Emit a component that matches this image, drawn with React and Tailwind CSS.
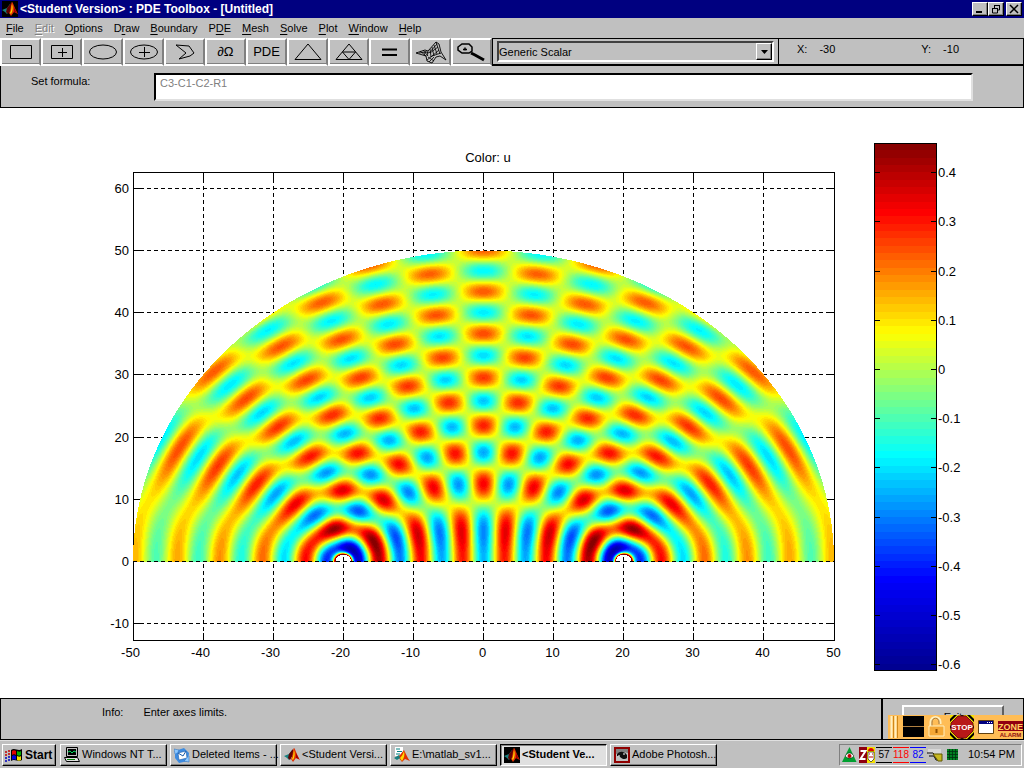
import { Children } from 'react';

const raised = 'border border-t-white border-l-white border-r-black border-b-black shadow-[inset_-1px_-1px_0_#808080]';

const menus = [
  ['', 'F', 'ile'],
  ['', 'E', 'dit', true],
  ['', 'O', 'ptions'],
  ['D', 'r', 'aw'],
  ['', 'B', 'oundary'],
  ['P', 'D', 'E'],
  ['', 'M', 'esh'],
  ['', 'S', 'olve'],
  ['', 'P', 'lot'],
  ['', 'W', 'indow'],
  ['', 'H', 'elp'],
];

// Colour map: position from the top of the bar (px) and rgb at that point
const BAR_TOP = 143;
const BAR_HEIGHT = 528;
const BANDS = 72;
const stops = [
  [0, [128, 0, 0]],
  [70, [255, 0, 0]],
  [190, [255, 255, 0]],
  [312, [0, 255, 255]],
  [436, [0, 0, 255]],
  [528, [0, 0, 140]],
];

function bandColor(i) {
  const y = ((i + 0.5) * BAR_HEIGHT) / BANDS;
  const n = Math.max(1, stops.findIndex((s) => s[0] >= y));
  const [y0, a] = stops[n - 1];
  const [y1, b] = stops[n];
  const t = (y - y0) / (y1 - y0);
  return `rgb(${a.map((c, k) => Math.round(c + (b[k] - c) * t)).join(',')})`;
}

const palette = Array.from({ length: BANDS }, (_, i) => bandColor(i));

// Two point sources at x = -20 and x = 20
const WAVELENGTH = 6.05;
const AMPLITUDE = 0.73;
const OFFSET = 0.025;

function wave(r) {
  return (AMPLITUDE / Math.sqrt(r)) * Math.cos((2 * Math.PI * (r - 23.6)) / WAVELENGTH);
}

// The near hole shadows the far source close to the base line
function shadow(dx, y) {
  if (dx < 40) return 1;
  const angle = y / dx;
  return 1 - 0.75 * Math.exp(-((angle / 0.13) ** 2)) * Math.min(1, (dx - 40) / 4);
}

function bandAt(px, py) {
  const x = (px - 483.5) / 7.01;
  const y = (561.5 - py) / 6.22;
  if (x * x + y * y > 2500) return -1;
  const r1 = Math.hypot(x + 20, y);
  const r2 = Math.hypot(x - 20, y);
  const near = Math.min(r1, r2);
  if (near < 1.1) return -1;
  const rim = 0.9 * Math.exp(-(near - 1.1) / 0.25);
  const u = wave(r1) * shadow(x + 20, y) + wave(r2) * shadow(20 - x, y) + rim + OFFSET;
  const band = Math.floor(((0.46 - u) / 1.073) * BANDS);
  return Math.min(BANDS - 1, Math.max(0, band));
}

// One path per colour, made of horizontal runs
function buildField() {
  const paths = palette.map(() => []);
  for (let y = 250; y < 562; y++) {
    let start = 133;
    let current = -1;
    for (let x = 133; x <= 835; x++) {
      const band = x === 835 ? -1 : bandAt(x + 0.5, y + 0.5);
      if (band !== current) {
        if (current >= 0) paths[current].push(`M${start} ${y}h${x - start}v1h${start - x}z`);
        start = x;
        current = band;
      }
    }
  }
  return paths.map((p) => p.join(''));
}

const field = buildField();
const xTicks = [-50, -40, -30, -20, -10, 0, 10, 20, 30, 40, 50];
const yTicks = [60, 50, 40, 30, 20, 10, 0, -10];
const barTicks = [0.4, 0.3, 0.2, 0.1, 0, -0.1, -0.2, -0.3, -0.4, -0.5, -0.6];
const xPos = (v) => Math.round(483 + v * 7.01) + 0.5;
const yPos = (v) => Math.round(561 - v * 6.22) + 0.5;

function WavePlot() {
  return (
    <svg viewBox="0 108 1024 590" className="h-full w-full" role="img" aria-label="Color: u" fontSize="13">
      <text x="488" y="162" textAnchor="middle">Color: u</text>
      <g stroke="black" fill="none" shapeRendering="crispEdges">
        {xTicks.slice(1, -1).map((v) => (
          <g key={v}>
            <path d={`M${xPos(v)} 172V640`} strokeDasharray="4 3" />
            <path d={`M${xPos(v)} 172v7M${xPos(v)} 640v-7`} />
          </g>
        ))}
        {yTicks.map((v) => (
          <g key={v}>
            <path d={`M133 ${yPos(v)}H834`} strokeDasharray="4 3" />
            <path d={`M133 ${yPos(v)}h7M834 ${yPos(v)}h-7`} />
          </g>
        ))}
        <path d="M133.500 172.500H834.500V640.500H133.500z" />
      </g>
      <g shapeRendering="crispEdges">
        {field.map((d, i) => (
          <path key={i} d={d} fill={palette[i]} />
        ))}
        <path d="M133 561.500H834" stroke="black" strokeDasharray="4 3" />
      </g>
      {yTicks.map((v) => (
        <text key={v} x="129" y={yPos(v) + 4.5} textAnchor="end">{v}</text>
      ))}
      {xTicks.map((v) => (
        <text key={v} x={xPos(v) - (v < 0 ? 3 : 1)} y="657" textAnchor="middle">{v}</text>
      ))}
      <g shapeRendering="crispEdges">
        {palette.map((c, i) => (
          <rect key={i} x="874" y={BAR_TOP + (i * BAR_HEIGHT) / BANDS} width="62" height={i === BANDS - 1 ? 7 : 8} fill={c} />
        ))}
        <rect x="874.5" y="143.5" width="62" height="527" fill="none" stroke="black" />
        {barTicks.map((v) => (
          <path key={v} d={`M874 ${Math.round(369 - v * 492) + 0.5}h6m51 0h6`} stroke="black" />
        ))}
      </g>
      {barTicks.map((v) => (
        <text key={v} x="938" y={Math.round(369 - v * 492) + 5}>{v}</text>
      ))}
    </svg>
  );
}

function MatlabIcon({ dark }) {
  return (
    <svg viewBox="0 0 16 16" className="h-4 w-4 shrink-0" aria-hidden="true">
      {dark && <path d="M0 0h16v16H0z" fill="#000" />}
      <path d="M0 9 5 7l3-4 1 5-4 5-2-2z" fill="#188080" />
      <path d="m5 7 4-5 1 4-4 7-2-2z" fill="#600000" />
      <path d="M10 1c1 0 2 5 6 12l-4-2-3 4-2-3c2-3 2-11 3-11z" fill="#e03000" />
      <path d="M10 3c1 3 1 7-1 10l-1-1c2-3 1-6 2-9z" fill="#ffe000" />
      <path d="m12 6 3 6-3-1z" fill="#a00000" />
    </svg>
  );
}

function ToolButton({ label, children }) {
  return (
    <button
      type="button"
      aria-label={label}
      className="flex h-7 w-[41px] shrink-0 items-center justify-center border-2 border-t-white border-l-white border-r-[#808080] border-b-white text-[13px] shadow-[inset_0_-1px_0_#808080]"
    >
      {children}
    </button>
  );
}

function Glyph({ children }) {
  return (
    <svg viewBox="0 0 34 24" className="h-6 w-[34px] shrink-0" fill="none" stroke="black" aria-hidden="true">
      {Children.toArray(children)}
    </svg>
  );
}

function Toolbar() {
  return (
    <div className="flex h-7 shrink-0">
      <ToolButton label="Rectangle"><Glyph><path d="M6.500 5.500h21v13h-21z" /></Glyph></ToolButton>
      <ToolButton label="Centered rectangle"><Glyph><path d="M6.500 5.500h21v13h-21zM17.500 8v9M13 12.500h9" /></Glyph></ToolButton>
      <ToolButton label="Ellipse"><Glyph><ellipse cx="17" cy="12" rx="13.5" ry="7" /></Glyph></ToolButton>
      <ToolButton label="Centered ellipse"><Glyph><ellipse cx="17" cy="12" rx="13.5" ry="7" /><path d="M17.500 7v10M12 12.500h11" /></Glyph></ToolButton>
      <ToolButton label="Polygon"><Glyph><path d="m8 5 13 1 5 7-4 3-11 3 7-6z" /></Glyph></ToolButton>
      <ToolButton label="Boundary mode">∂Ω</ToolButton>
      <ToolButton label="PDE specification">PDE</ToolButton>
      <ToolButton label="Initialize mesh"><Glyph><path d="M4 19.500h26L17 4z" /></Glyph></ToolButton>
      <ToolButton label="Refine mesh"><Glyph><path d="M4 19.500h26L17 4zM10.500 12h13L17 19.500z" /></Glyph></ToolButton>
      <ToolButton label="Solve PDE"><Glyph><path d="M9 9.500h15M9 15h15" strokeWidth="2" /></Glyph></ToolButton>
      <ToolButton label="Plot solution">
        <Glyph>
          <path d="m2 13 9-3 3 1 8-9 3 2 2 8 5 8-6-4-4 1-4 6-5-2-1-5z" strokeWidth=".9" />
          <path d="m5 13 7-1 3 1 8-9M6 11l6 5M9 10l5 6M12 11l-2 4M14 11l-1 5M16 9l1 8M18 7l2 9M20 5l3 9M22 2l4 12M16 13l8-6M17 17l8-7M13 20l5-4 9-3M15 22l5-5M14 17l6 4" strokeWidth=".8" />
        </Glyph>
      </ToolButton>
      <ToolButton label="Zoom">
        <Glyph>
          <path d="M7 4h7l3 3v4l-3 2H7l-4-3V7z" strokeWidth="1.500" />
          <path d="m16 13 4 2 9 5" strokeWidth="3" />
          <path d="M8 9.500h4M10 7.500v3" strokeWidth="1.500" />
        </Glyph>
      </ToolButton>
      <div className="flex w-[287px] shrink-0 items-center border border-b-2 border-black px-1">
        <div className="relative flex-1">
          <select
            aria-label="Application"
            className="block h-[21px] w-full appearance-none rounded-none border-2 border-t-[#404040] border-l-[#404040] border-r-white border-b-white bg-[#c0c0c0] pl-0 text-[11px] leading-4"
          >
            <option>Generic Scalar</option>
          </select>
          <span className={`pointer-events-none absolute top-0.5 right-0.5 flex h-[17px] w-4 items-center justify-center bg-[#c0c0c0] ${raised}`}>
            <svg viewBox="0 0 7 4" className="h-1 w-[7px]" aria-hidden="true"><path d="M0 0h7L3.500 4z" /></svg>
          </span>
        </div>
      </div>
      <div className="flex flex-1 gap-[86px] border border-b-2 border-l-0 border-black pt-0.5 pl-[18px] text-[11px] leading-4">
        <span className="flex gap-3"><span>X:</span><output>-30</output></span>
        <span className="flex gap-3"><span>Y:</span><output>-10</output></span>
      </div>
    </div>
  );
}

function WindowButton({ label, children }) {
  return (
    <button type="button" aria-label={label} className={`flex h-[14px] w-4 items-center justify-center bg-[#c0c0c0] ${raised}`}>
      <svg viewBox="0 0 10 10" className="h-2.5 w-2.5 shrink-0" fill="none" stroke="black" aria-hidden="true">{children}</svg>
    </button>
  );
}

function TaskButton({ icon, active, children }) {
  return (
    <button
      type="button"
      className={`flex h-[22px] w-[107px] shrink-0 items-center gap-0.5 px-[3px] text-left text-[11px] whitespace-nowrap ${
        active
          ? 'border border-t-black border-l-black border-r-white border-b-white bg-[#e0e0e0] font-bold shadow-[inset_1px_1px_0_#808080]'
          : raised
      }`}
    >
      {icon}
      <span>{children}</span>
    </button>
  );
}

const computerIcon = (
  <svg viewBox="0 0 16 16" className="h-4 w-4 shrink-0" aria-hidden="true">
    <path d="M2.500.5h11v9h-11z" fill="#c0c0c0" stroke="#000" />
    <path d="M4 2h8v6H4z" fill="#000" />
    <path d="m4 5 2-1 2 2 2-2 2 1" fill="none" stroke="#00e060" />
    <path d="M.5 10.500h13l2 4H2.500z" fill="#e0e0e0" stroke="#000" />
    <path d="M3 12.500h8" stroke="#008000" />
  </svg>
);

const mailIcon = (
  <svg viewBox="0 0 16 16" className="h-4 w-4 shrink-0" aria-hidden="true">
    <path d="M1 4 10 1l5 5-1 8-9 2-4-5z" fill="#3d8be0" />
    <path d="m4 6 8-2 1 7-8 2z" fill="#fff" stroke="#1c5ca8" strokeWidth=".6" />
    <path d="m4 6 5 3 3-5" fill="none" stroke="#1c5ca8" />
    <path d="M1 7 0 2l5 1-1 2M15 9v6l-5-1 2-2" fill="#8cc8ff" stroke="#2468b8" strokeWidth=".5" />
  </svg>
);

const editorIcon = (
  <svg viewBox="0 0 16 16" className="h-4 w-4 shrink-0" aria-hidden="true">
    <path d="M1 0h8v9H1z" fill="#fff" />
    <path d="M2 2h4M3 4.500h5M2 7h4" stroke="#008080" />
    <path d="m1 11 5-3 4-5c1 2 3 7 6 11l-5-2-3 3-3-4z" fill="#e03000" />
    <path d="M10 4c1 4 0 7-2 10l-2-3c2-2 3-4 4-7z" fill="#ffd800" />
    <path d="m0 11 5-3 1 3-3 2z" fill="#188080" />
  </svg>
);

const photoshopIcon = (
  <svg viewBox="0 0 16 16" className="h-4 w-4 shrink-0" aria-hidden="true">
    <path d="M1 1h14v14H1z" fill="#c0c0c0" stroke="#900000" strokeWidth="2" />
    <path d="M2 2h12v4L9 5 2 7z" fill="#808080" />
    <path d="M3 7c3-3 7-3 10 1v3c-2 2-5 1-7-1-1-1-2-1-3-1z" fill="#101010" />
    <path d="M4 9h2m3-2h2" stroke="#fff" />
  </svg>
);

const windowsIcon = (
  <svg viewBox="0 0 18 16" className="h-4 w-[18px] shrink-0" aria-hidden="true">
    <path d="M6 3c4-3 7 2 11-1v11c-4 3-7-2-11 1z" fill="#000" />
    <path d="M7 4c1-1 3-1 4 0v4c-1-1-3-1-4 0z" fill="#e00000" />
    <path d="M12 4c2 1 3 1 4 0v4c-1 1-3 1-4 0z" fill="#00b000" />
    <path d="M7 9c1-1 3-1 4 0v4c-1-1-3-1-4 0z" fill="#0000e0" />
    <path d="M12 9c2 1 3 1 4 0v4c-1 1-3 1-4 0z" fill="#f0e000" />
    <path d="M0 5h2m1-1h2M0 8h2m1-1h2" stroke="#c00000" strokeWidth="1.500" />
    <path d="M0 11h2m1-1h2M0 14h2m1-1h2" stroke="#0000c0" strokeWidth="1.500" />
  </svg>
);

function AlarmBar() {
  return (
    <div className="absolute right-0 bottom-0 flex h-6 w-[135px] items-center bg-[#ffbd56]">
      <svg viewBox="0 0 135 24" className="h-6 w-[135px]" aria-hidden="true">
        <path d="M3.500 1v22M7.500 1v22" stroke="#fff0c0" strokeWidth="2" />
        <path d="M5.500 1v22M9.500 1v22" stroke="#d08818" />
        <path d="M15 1h21v21H15z" />
        <path d="M15 11.500h21" stroke="#b08040" />
        <path d="M43 12V7c0-6 9-6 9 0v2" fill="none" stroke="#fff0c0" strokeWidth="3" />
        <path d="M44 12V7c0-5 7-5 7 0v2" fill="none" stroke="#a06010" />
        <path d="M41 11h15v10H41z" fill="#f4a836" stroke="#fff0c0" />
        <path d="M48.500 14v4" stroke="#905000" strokeWidth="2" />
        <path d="M62 0h24v24H62z" fill="#f4e000" />
        <path d="M62 4l4-4h3l-7 7zM79 0l7 7V4l-4-4zM62 17l7 7h-3l-4-4zM86 17l-7 7h3l4-4zM62 11l11-11h3L62 14zM72 24l14-14v3L75 24z" />
        <path d="M70 1h8l7 7v8l-7 7h-8l-7-7V8z" fill="#b81818" stroke="#701010" />
        <text x="74" y="15" textAnchor="middle" fontSize="8" fontWeight="bold" fill="#fff">STOP</text>
        <path d="M90.500 5.500h15v13h-15z" fill="#fff" stroke="#604010" />
        <path d="M91 6h14v3H91z" fill="#000080" />
        <path d="M99 7.500h5" stroke="#fff" strokeDasharray="1 1" />
        <path d="M110 6h25v10h-25z" fill="#900010" />
        <text x="122.500" y="15" textAnchor="middle" fontSize="9" fontWeight="bold" fill="#ffd060">ZONE</text>
        <text x="122.500" y="22" textAnchor="middle" fontSize="6" fontWeight="bold" fill="#901010">ALARM</text>
      </svg>
    </div>
  );
}

function Reading({ color, children }) {
  return <span className={`flex h-4 w-4 items-center justify-center border-y font-['Liberation_Sans',sans-serif] text-[10px] ${color}`}>{children}</span>;
}

function Tray() {
  return (
    <div className="ml-auto flex h-[22px] w-[183px] shrink-0 items-center gap-px border border-t-[#808080] border-l-[#808080] border-r-white border-b-white pl-0.5 text-[11px]">
      <svg viewBox="0 0 33 16" className="h-4 w-[33px] shrink-0" aria-hidden="true">
        <path d="m7.500 0 7 15H0z" fill="#00a030" />
        <path d="M3 9c3-4 6-4 9 0-3 3-6 3-9 0z" fill="#fff" stroke="#000" strokeWidth=".5" />
        <circle cx="7.500" cy="9" r="2" fill="#c00000" />
        <path d="M17 0h8v16h-8z" fill="#900010" />
        <path d="M18.500 4h5l-5 8h5" fill="none" stroke="#fff" strokeWidth="2" />
        <path d="M25 0h8v16h-8z" fill="#f4e000" />
        <path d="M26 5h6v7l-3 3-3-3z" fill="#fff" stroke="#000" strokeWidth=".6" />
        <path d="M26 4c0-4 6-4 6 0z" fill="#e00000" />
        <path d="M27 7h1m2 0h1M27 10h4" stroke="#c00000" />
      </svg>
      <Reading color="border-black text-black">57</Reading>
      <Reading color="border-[#ff0000] text-[#ff0000]">118</Reading>
      <Reading color="border-[#0000ff] text-[#0000ff]">82</Reading>
      <svg viewBox="0 0 32 16" className="h-4 w-8 shrink-0" aria-hidden="true">
        <path d="M1 2h13v5H1z" fill="#d8d8d8" />
        <path d="M0 6h6l2 2h6M2 9h5l2 4h4" fill="none" stroke="#000" />
        <path d="M6 7h9v7h-4l-2-3z" fill="#c8b820" stroke="#605800" />
        <path d="M20 2h11v11H20z" fill="#008020" />
        <path d="M20 4.500h11M20 7.500h11M20 10.500h11M22.500 2v11M25.500 2v11M28.500 2v11" stroke="#003010" strokeWidth=".8" />
      </svg>
      <time className="ml-auto pr-1.5">10:54 PM</time>
    </div>
  );
}

export default function App() {
  return (
    <div className="flex min-h-screen flex-col bg-[#c0c0c0] font-['Liberation_Sans',Arial,sans-serif] text-black">
      <header className="flex h-[18px] shrink-0 items-center bg-[#000080] px-0.5">
        <MatlabIcon dark />
        <h1 className="ml-0.5 flex-1 text-xs leading-4 font-bold text-white">&lt;Student Version&gt; : PDE Toolbox - [Untitled]</h1>
        <div className="flex">
          <WindowButton label="Minimize"><path d="M1 8h6" strokeWidth="2" /></WindowButton>
          <WindowButton label="Restore"><path d="M3 1.500h6M3.500 1v3M8.500 1v5H7M1 4.500h6M1.500 4v5h5V4" /></WindowButton>
          <span className="w-0.5" />
          <WindowButton label="Close"><path d="m1 1 8 8M9 1 1 9" strokeWidth="1.500" /></WindowButton>
        </div>
      </header>

      <nav className="flex h-5 shrink-0 items-center gap-[11px] pl-1.5 text-[11px]">
        {menus.map(([pre, key, post, disabled]) => (
          <button key={pre + key + post} type="button" disabled={disabled} className="disabled:text-[#808080] disabled:[text-shadow:1px_1px_0_white]">
            {pre}<u className="underline-offset-2">{key}</u>{post}
          </button>
        ))}
      </nav>

      <Toolbar />

      <div className="flex h-[42px] shrink-0 items-start border border-t-0 border-black pt-[7px] pr-[50px] pl-[30px] text-[11px]">
        <label htmlFor="formula" className="w-[123px] leading-4">Set formula:</label>
        <input
          id="formula"
          readOnly
          value="C3-C1-C2-R1"
          className="h-7 flex-1 border-2 border-t-black border-l-black border-r-[#e0e0e0] border-b-[#e0e0e0] bg-white px-1 pb-2 text-[#808080] outline-none"
        />
      </div>

      <main className="min-h-0 flex-1 bg-white">
        <WavePlot />
      </main>

      <div className="flex h-[42px] shrink-0 border border-black text-[11px]">
        <p className="flex flex-1 gap-5 pt-[5px] pl-[101px] leading-4"><span>Info:</span><span>Enter axes limits.</span></p>
        <div className="relative w-[142px] border-l-2 border-black px-[19px] pt-1.5">
          <button type="button" className="h-6 w-full border-2 border-t-white border-l-white border-r-[#606060] border-b-[#606060]">Exit</button>
          <AlarmBar />
        </div>
      </div>

      <footer className="flex h-7 shrink-0 items-center gap-[3px] border-t border-[#e0e0e0] px-0.5">
        <button type="button" className={`mr-px flex h-[22px] w-[54px] shrink-0 items-center gap-0.5 px-0.5 text-xs font-bold ${raised}`}>
          {windowsIcon}Start
        </button>
        <TaskButton icon={computerIcon}>Windows NT T...</TaskButton>
        <TaskButton icon={mailIcon}>Deleted Items - ...</TaskButton>
        <TaskButton icon={<MatlabIcon />}>&lt;Student Versi...</TaskButton>
        <TaskButton icon={editorIcon}>E:\matlab_sv1...</TaskButton>
        <TaskButton icon={<MatlabIcon dark />} active>&lt;Student Ve...</TaskButton>
        <TaskButton icon={photoshopIcon}>Adobe Photosh...</TaskButton>
        <Tray />
      </footer>
    </div>
  );
}
